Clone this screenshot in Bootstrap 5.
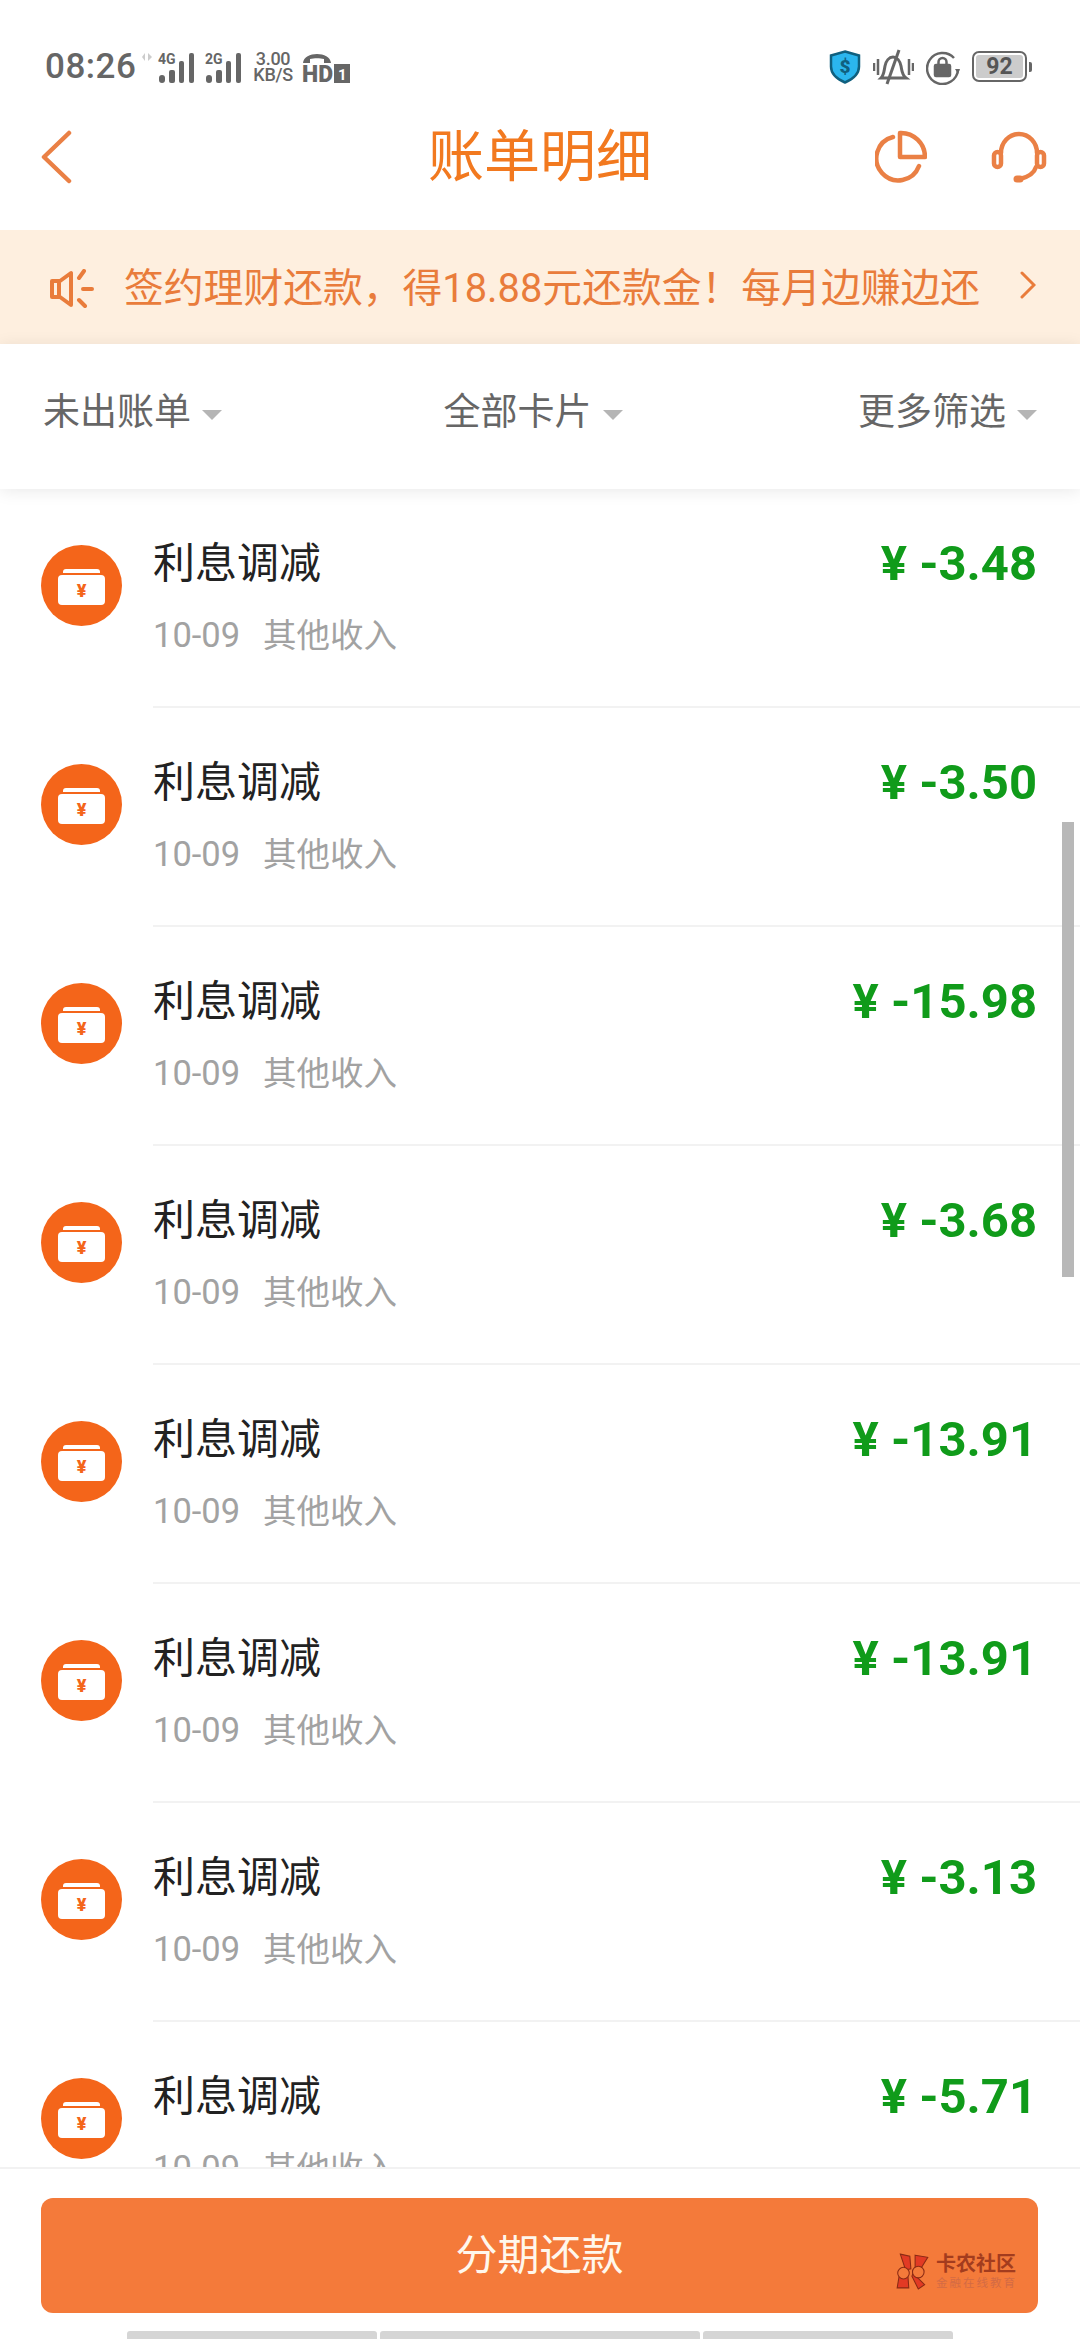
<!DOCTYPE html>
<html lang="zh-CN">
<head>
<meta charset="UTF-8">
<title>账单明细</title>
<link rel="stylesheet" href="https://cdn.jsdelivr.net/npm/bootstrap@5.3.3/dist/css/bootstrap.min.css">
<style>
    html, body { background: #fff; }
    body { font-family: Roboto, "Noto Sans CJK SC", sans-serif; }
    .phone { width: 1080px; height: 2340px; overflow: hidden; background: #fff; }
    .statusbar { height: 96px; padding: 37px 48px 0 45px; color: #666; }
    .clock { font-size: 35px; font-weight: 500; line-height: 36px; letter-spacing: .5px; }
    .net-icons { margin-left: 6px; }
    .speed { font-size: 18px; line-height: 16px; font-weight: 500; text-align: center; margin-left: 7px; margin-right: 9px; letter-spacing: -.3px; }
    .battery { width: 55px; height: 31px; border: 2px solid #666; border-radius: 7px; padding: 2px; }
    .battery-fill { background: #ccc; border-radius: 3px; font-size: 23px; font-weight: 700; line-height: 23px; text-align: center; height: 100%; color: #555; }
    .battery-cap { width: 3px; height: 10px; background: #666; border-radius: 0 2px 2px 0; margin-left: 2px; }
    .right-icons { gap: 12px; }
    .topnav { height: 134px; padding: 0 33px 12px 40px; grid-template-columns: 1fr auto 1fr; align-items: center; }
    .page-title { color: #f2791f; font-size: 56px; line-height: 1; font-weight: 400; margin: 0 7px 0 0; }
    .nav-actions { gap: 64px; }
    .notice { height: 114px; background: #feefdf; color: #e97c3b; font-size: 39.8px; padding: 3px 44px 0 50px; white-space: nowrap; }
    .notice-text { margin-left: 30px; }
    .filters { height: 145px; padding: 0 43px 7px; color: #666; font-size: 37px; position: relative; z-index: 2; box-shadow: 0 2px 16px rgba(0,0,0,.09); background: #fff; }
    .filter-mid { margin-right: 14px; }
    .caret-down { width: 0; height: 0; border-left: 10px solid transparent; border-right: 10px solid transparent; border-top: 10px solid #b5b5b5; margin-left: 11px; margin-top: 3px; }
    .bills { height: 1678px; overflow: hidden; position: relative; }
    .bill { height: 219px; padding-left: 41px; }
    .bill-icon { width: 81px; height: 81px; margin-top: 56px; flex: none; }
    .bill-body { margin-left: 31px; border-bottom: 2px solid #f2f2f2; height: 219px; flex: 1; padding-right: 43px; }
    .bill-name { font-size: 42px; color: #222; line-height: 58px; margin-top: 46px; }
    .bill-meta { font-size: 33.5px; color: #a2a2a2; line-height: 46px; margin-top: 19px; }
    .bill-date { font-size: 34.5px; }
    .bill-meta span + span { margin-left: 23px; }
    .amount { font-size: 49px; font-weight: 700; color: #109b1a; line-height: 58px; margin-top: 46px; }
    .scroll-thumb { position: absolute; right: 6px; top: 333px; width: 12px; height: 455px; background: #b8b8b8; z-index: 1; }
    .paybar { height: 172px; border-top: 2px solid #f2f2f2; padding: 29px 42px 0 41px; background: #fff; }
    .pay-btn { height: 115px; width: 100%; background: #f47a3a; border: 0; border-radius: 12px; color: #fff7ec; font-size: 42px; position: relative; }
    .pay-btn:hover { background: #f47a3a; color: #fff7ec; }
    .watermark { position: absolute; right: 21px; top: 54px; display: flex; align-items: center; gap: 4px; }
    .wm-name { color: #a33c1e; font-size: 20px; font-weight: 700; line-height: 23px; letter-spacing: 0; }
    .wm-sub { color: #d36a45; font-size: 11.5px; line-height: 14px; letter-spacing: 2px; }
    .homebar { height: 8px; margin-top: 18px; margin-left: -41px; padding-left: 127px; gap: 3px; }
    .homebar div { background: #d5d5d5; height: 8px; border-radius: 3px 3px 0 0; }
</style>
</head>
<body>
<div class="phone d-flex flex-column">

    <!-- status bar -->
    <div class="statusbar d-flex justify-content-between align-items-center align-self-stretch">
        <div class="d-flex align-items-center">
            <span class="clock">08:26</span>
            <svg class="net-icons" width="104" height="34" viewBox="0 0 104 34" fill="#666">
                <path d="M3 11V3L0 7zM6 3v8l4-4z" fill="#ccc"/>
                <text x="16" y="14" font-size="14" font-weight="700" font-family="Roboto">4G</text>
                <rect x="17" y="25" width="6" height="8" rx="3"/><rect x="27" y="20" width="6" height="13" rx="2"/><rect x="37" y="11" width="5" height="22" rx="2"/><rect x="47" y="3" width="5" height="30" rx="2"/>
                <text x="63" y="14" font-size="14" font-weight="700" font-family="Roboto">2G</text>
                <rect x="64" y="25" width="6" height="8" rx="3"/><rect x="74" y="20" width="6" height="13" rx="2"/><rect x="84" y="11" width="5" height="22" rx="2"/><rect x="94" y="3" width="5" height="30" rx="2"/>
            </svg>
            <div class="speed">3.00<br>KB/S</div>
            <svg width="48" height="32" viewBox="0 0 48 32" fill="#666">
                <path d="M1 12C2 0 28 0 29 12h-7V8c-4-1-10-1-14 0v4z"/>
                <text x="0" y="31" font-size="23" font-weight="900" font-family="Roboto" textLength="31" lengthAdjust="spacingAndGlyphs">HD</text>
                <rect x="32" y="13" width="16" height="19"/>
                <text x="36" y="29" font-size="15" font-weight="700" fill="#fff" font-family="Roboto">1</text>
            </svg>
        </div>
        <div class="d-flex align-items-center right-icons">
            <svg width="32" height="34" viewBox="0 0 32 34">
                <path d="M16 1.5l14 4v11c0 8-7 13-14 16C9 29.500 2 24.500 2 16.500v-11z" fill="#2bb6ee" stroke="#10607f" stroke-width="2.5"/>
                <text x="16" y="23" font-size="19" font-weight="900" text-anchor="middle" fill="#10607f" font-family="Roboto">$</text>
            </svg>
            <svg width="41" height="36" viewBox="0 0 41 36" fill="none" stroke="#666" stroke-width="3">
                <path d="M8 29c3-3 3-7 4-12 1-5 4-9 8-9s7 4 8 9c1 5 1 9 5 12z"/>
                <path d="M14 35L26 1" />
                <path d="M1 14v8M5 10v16M36 10v16M40 14v8" stroke-width="2.500"/>
            </svg>
            <svg width="34" height="36" viewBox="0 0 34 36" fill="none" stroke="#666" stroke-width="2.5">
                <path d="M28 9A15.500 15.500 0 1 0 32 21"/>
                <path d="M29 20l3 5 2-5z" fill="#666" stroke="none"/>
                <rect x="9" y="16" width="15" height="11" rx="1" fill="#666"/>
                <path d="M12.500 16v-3a4 4 0 0 1 8 0v3"/>
            </svg>
            <div class="d-flex align-items-center">
                <div class="battery"><div class="battery-fill">92</div></div>
                <div class="battery-cap"></div>
            </div>
        </div>
    </div>

    <!-- title row -->
    <div class="topnav d-grid">
        <svg width="34" height="54" viewBox="0 0 34 54" fill="none" stroke="#ea8045" stroke-width="4.5" stroke-linecap="round" stroke-linejoin="round"><path d="M29 3L4 27l25 24"/></svg>
        <h1 class="page-title">账单明细</h1>
        <div class="d-flex align-items-center justify-content-end nav-actions">
            <svg width="52" height="54" viewBox="0 0 52 54" fill="none" stroke="#ea8045" stroke-width="4.5" stroke-linecap="round">
                <path d="M18 7A22 22 0 1 0 44 36"/>
                <path d="M25 3a24 24 0 0 1 25 24H25z" stroke-linejoin="round"/>
            </svg>
            <svg width="56" height="52" viewBox="0 0 56 52" fill="none" stroke="#ea8045" stroke-width="4.5" stroke-linecap="round">
                <path d="M10 22A18 19 0 0 1 46 22"/>
                <rect x="3" y="21" width="7" height="15" rx="3.500"/><rect x="46" y="21" width="7" height="15" rx="3.500"/>
                <path d="M45 36C43 43 37 46 29 48"/>
                <path d="M26 48h3" stroke-width="7"/>
            </svg>
        </div>
    </div>

    <!-- notice -->
    <div class="notice d-flex align-items-center">
        <svg width="44" height="40" viewBox="0 0 44 40" fill="none" stroke="#e97c3b" stroke-width="4" stroke-linecap="round" stroke-linejoin="round">
            <path d="M2 12h8L21 4v32l-11-8H2zM9 12v16" />
            <path d="M29 9l5-7M33 20h9M29 31l6 6"/>
        </svg>
        <span class="notice-text">签约理财还款，得18.88元还款金！每月边赚边还</span>
        <svg width="16" height="28" viewBox="0 0 16 28" fill="none" stroke="#e97c3b" stroke-width="3" stroke-linecap="round" class="ms-auto mb-2"><path d="M2 2l12 12L2 26"/></svg>
    </div>

    <!-- filters -->
    <div class="filters d-flex align-items-center justify-content-between">
        <div class="d-flex align-items-center">未出账单<span class="caret-down"></span></div>
        <div class="d-flex align-items-center filter-mid">全部卡片<span class="caret-down"></span></div>
        <div class="d-flex align-items-center">更多筛选<span class="caret-down"></span></div>
    </div>

    <!-- bills, filled from data below -->
    <div class="bills" id="bills">
        <div class="scroll-thumb"></div>
    </div>

    <!-- pay button -->
    <div class="paybar">
        <button type="button" class="btn pay-btn">分期还款
            <span class="watermark">
                <svg width="38" height="38" viewBox="0 0 36 36">
                    <path d="M6 2l9 2 1 12-5 1zM20 3l12 2-8 13-4-1zM5 22l8-2 1 14H3zM18 20l11 11-6 4-6-12z" fill="#e23a24" stroke="#8a2a14"/>
                    <circle cx="9" cy="20" r="5.500" fill="#f47a3a" stroke="#8a2a14"/>
                    <circle cx="23" cy="19" r="5.500" fill="#f47a3a" stroke="#8a2a14"/>
                </svg>
                <span class="d-flex flex-column align-items-start">
                    <span class="wm-name">卡农社区</span>
                    <span class="wm-sub">金融在线教育</span>
                </span>
            </span>
        </button>
        <div class="homebar d-flex">
            <div style="width:250px"></div>
            <div style="width:320px"></div>
            <div style="width:250px"></div>
        </div>
    </div>
</div>
<script src="https://cdn.jsdelivr.net/npm/bootstrap@5.3.3/dist/js/bootstrap.bundle.min.js"></script>
<script>
const amounts = ['-3.48', '-3.50', '-15.98', '-3.68', '-13.91', '-13.91', '-3.13', '-5.71'];
const icon = `<svg class="bill-icon" viewBox="0 0 81 81">
    <circle cx="40.500" cy="40.500" r="40.500" fill="#f4651a"/>
    <path d="M22 27a3 3 0 0 1 3-3h31a3 3 0 0 1 3 3v1H22z" fill="#fff"/>
    <rect x="17" y="30" width="47" height="30" rx="4" fill="#fff"/>
    <text x="40.500" y="52" font-size="18" font-weight="900" text-anchor="middle" fill="#f4651a" font-family="Roboto">¥</text>
</svg>`;
const list = document.getElementById('bills');
amounts.forEach(a => {
    const row = document.createElement('div');
    row.className = 'bill d-flex';
    row.innerHTML = icon + `<div class="bill-body d-flex justify-content-between">
        <div>
            <div class="bill-name">利息调减</div>
            <div class="bill-meta"><span class="bill-date">10-09</span><span>其他收入</span></div>
        </div>
        <div class="amount">¥ ${a}</div>
    </div>`;
    list.appendChild(row);
});
</script>
</body>
</html>
